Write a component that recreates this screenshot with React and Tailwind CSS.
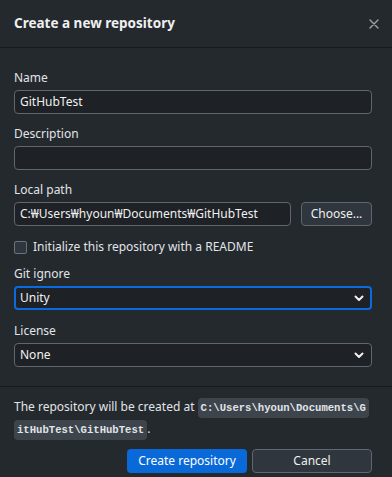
import React from "react";

const Chevron = () => (
  <svg width="10" height="7" viewBox="0 0 10 7" className="shrink-0">
    <path d="M1.5 1.5 L5 5 L8.5 1.5" fill="none" stroke="#f0f0f0" strokeWidth="2" strokeLinecap="round" strokeLinejoin="round" />
  </svg>
);

const Label = ({ children }) => (
  <div className="text-[12px] leading-4 mb-[4px] text-[#e1e4e8]">{children}</div>
);

const TextBox = ({ value, className = "" }) => (
  <div
    className={
      "h-6 rounded-[4px] border border-[#5f666e] bg-[#1e2125] px-[5px] flex items-center text-[12px] text-[#f0f0f0] " +
      className
    }
  >
    {value}
  </div>
);

const Select = ({ value, focused }) => (
  <div
    className={
      "h-6 rounded-[4px] bg-[#1e2125] flex items-center justify-between text-[12px] text-[#f0f0f0] " +
      (focused ? "border-2 border-[#0a6be0] pl-[4px] pr-[6px]" : "border border-[#5f666e] pl-[5px] pr-[7px]")
    }
  >
    <span>{value}</span>
    <Chevron />
  </div>
);

const mono = { fontFamily: '"Liberation Mono", "DejaVu Sans Mono", monospace' };

export default function App() {
  return (
    <div
      className="w-[392px] h-[477px] overflow-hidden bg-[#24292e] text-[#e1e4e8]"
      style={{ fontFamily: '"Noto Sans", "Open Sans", sans-serif' }}
    >
      <div className="h-[48px] border-b border-[#16191c] pl-[14px] pr-[13px] flex items-center justify-between">
        <h1 className="text-[13.5px] font-bold text-[#f0f0f0]">Create a new repository</h1>
        <svg width="10" height="10" viewBox="0 0 10 10">
          <path d="M1 1 L9 9 M9 1 L1 9" stroke="#9da3a9" strokeWidth="1.4" strokeLinecap="round" />
        </svg>
      </div>

      <div className="pl-[14px] pr-[20px] pt-[22px] pb-[19px] flex flex-col gap-3 border-b border-[#16191c]">
        <div>
          <Label>Name</Label>
          <TextBox value="GitHubTest" />
        </div>
        <div>
          <Label>Description</Label>
          <TextBox value="" />
        </div>
        <div>
          <Label>Local path</Label>
          <div className="flex gap-[10px]">
            <TextBox value="C:₩Users₩hyoun₩Documents₩GitHubTest" className="flex-1" />
            <button className="h-6 w-[71px] rounded-[4px] border border-[#5f666e] bg-[#2f363d] text-[12px] text-[#f0f0f0]">
              Choose...
            </button>
          </div>
        </div>
        <div className="flex items-center gap-[6px] h-4 mt-[1px] -mb-[1px]">
          <div className="w-[13px] h-[13px] rounded-[2px] border border-[#6a737d] bg-[#2f363d]" />
          <span className="text-[12px] text-[#e1e4e8]">Initialize this repository with a README</span>
        </div>
        <div>
          <Label>Git ignore</Label>
          <Select value="Unity" focused />
        </div>
        <div className="mt-[1px]">
          <Label>License</Label>
          <Select value="None" />
        </div>
      </div>

      <div className="pl-[14px] pr-[20px] pt-[10px]">
        <p className="text-[12px] leading-[19.5px] text-[#e1e4e8]">
          The repository will be created at{" "}
          <code className="whitespace-nowrap bg-[#3d444c] rounded-[4px] px-[3px] py-[4px] text-[10.6px] font-bold text-[#e1e4e8]" style={mono}>
            C:\Users\hyoun\Documents\G
          </code>
          <br />
          <code className="whitespace-nowrap bg-[#3d444c] rounded-[4px] px-[3px] py-[4px] text-[10.6px] font-bold text-[#e1e4e8]" style={mono}>
            itHubTest\GitHubTest
          </code>
          .
        </p>
        <div className="flex justify-end gap-[5px] mt-[9px]">
          <button className="h-6 w-[120px] rounded-[4px] bg-[#0a69d8] text-[12px] text-white">
            Create repository
          </button>
          <button className="h-6 w-[120px] rounded-[4px] border border-[#5f666e] bg-[#2f363d] text-[12px] text-[#f0f0f0]">
            Cancel
          </button>
        </div>
      </div>
    </div>
  );
}
